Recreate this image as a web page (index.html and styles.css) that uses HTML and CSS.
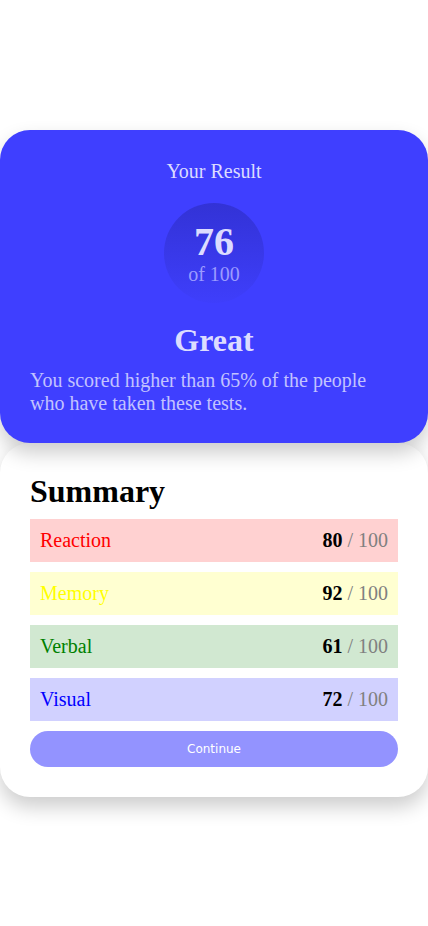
FILE: index.html
```html
<!DOCTYPE html>
<html lang="en">
<head>
<meta charset="utf-8">
<title>Results summary</title>
<link rel="stylesheet" href="styles.css">
</head>
<body>
<main class="page">
  <section class="result">
    <h1 class="result-title">Your Result</h1>
    <div class="score-circle">
      <span class="score">76</span>
      <span class="score-of">of 100</span>
    </div>
    <h2 class="grade">Great</h2>
    <p class="result-text">You scored higher than 65% of the people who have taken these tests.</p>
  </section>
  <section class="summary">
    <h2 class="summary-title">Summary</h2>
    <ul class="items">
      <li class="item item-reaction"><span class="item-name">Reaction</span><span class="item-score"><b>80</b> <span class="muted">/ 100</span></span></li>
      <li class="item item-memory"><span class="item-name">Memory</span><span class="item-score"><b>92</b> <span class="muted">/ 100</span></span></li>
      <li class="item item-verbal"><span class="item-name">Verbal</span><span class="item-score"><b>61</b> <span class="muted">/ 100</span></span></li>
      <li class="item item-visual"><span class="item-name">Visual</span><span class="item-score"><b>72</b> <span class="muted">/ 100</span></span></li>
    </ul>
    <button class="continue" type="button">Continue</button>
  </section>
</main>
</body>
</html>
```
FILE: styles.css
```css
* { box-sizing: border-box; }
html, body { margin: 0; padding: 0; }
body {
  font-family: "Liberation Serif", "Times New Roman", serif;
  background: #ffffff;
}
.page {
  min-height: 926px;
  display: flex;
  flex-direction: column;
  justify-content: center;
}
.result {
  background: #3f3fff;
  border-radius: 30px;
  padding: 30px 30px 28px;
  text-align: center;
  box-shadow: 0 10px 20px rgba(0, 0, 0, 0.2);
  position: relative;
  z-index: 1;
}
.result-title {
  margin: 0;
  font-size: 20px;
  font-weight: normal;
  line-height: 23px;
  color: #dcdcff;
}
.score-circle {
  width: 100px;
  height: 100px;
  margin: 20px auto 0;
  border-radius: 50%;
  background: linear-gradient(to bottom, rgba(40, 40, 180, 0.55), rgba(60, 60, 230, 0.15));
  display: flex;
  flex-direction: column;
  align-items: center;
  justify-content: center;
}
.score {
  font-size: 40px;
  font-weight: bold;
  line-height: 42px;
  color: #dcdcff;
}
.score-of {
  font-size: 20px;
  line-height: 22px;
  color: #9b9bff;
}
.grade {
  margin: 19px 0 0;
  font-size: 32px;
  line-height: 37px;
  font-weight: bold;
  color: #dcdcff;
}
.result-text {
  margin: 10px 0 0;
  text-align: left;
  font-size: 20px;
  line-height: 23px;
  color: #c2c2ff;
}
.summary {
  background: #ffffff;
  border-radius: 30px;
  padding: 30px 30px 30px;
  box-shadow: 0 10px 20px rgba(0, 0, 0, 0.2);
}
.summary-title {
  margin: 0 0 9px;
  font-size: 32px;
  line-height: 37px;
  font-weight: bold;
  color: #000;
}
.items {
  list-style: none;
  margin: 0;
  padding: 0;
  display: flex;
  flex-direction: column;
  gap: 10px;
}
.item {
  height: 43px;
  display: flex;
  align-items: center;
  justify-content: space-between;
  padding: 0 10px;
  font-size: 20px;
}
.item-score b { color: #000; }
.muted { color: #808080; }
.item-reaction { background: rgba(255, 0, 0, 0.18); }
.item-reaction .item-name { color: #ff0000; }
.item-memory { background: rgba(255, 255, 0, 0.18); }
.item-memory .item-name { color: #ffff00; }
.item-verbal { background: rgba(0, 128, 0, 0.18); }
.item-verbal .item-name { color: #008000; }
.item-visual { background: rgba(0, 0, 255, 0.18); }
.item-visual .item-name { color: #0000ff; }
.continue {
  display: block;
  width: 100%;
  height: 36px;
  margin-top: 10px;
  border: none;
  border-radius: 18px;
  background: #9393ff;
  color: #ffffff;
  font-family: "DejaVu Sans", sans-serif;
  font-size: 12px;
}
```
